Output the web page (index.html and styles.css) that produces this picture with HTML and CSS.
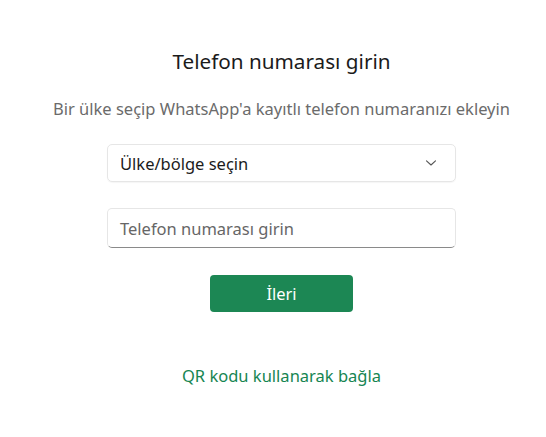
FILE: index.html
```html
<!DOCTYPE html>
<html lang="tr">
<head>
<meta charset="utf-8">
<link rel="stylesheet" href="styles.css">
</head>
<body>
<main class="page">
  <h1 class="title">Telefon numarası girin</h1>
  <p class="subtitle">Bir ülke seçip WhatsApp'a kayıtlı telefon numaranızı ekleyin</p>
  <div class="select">
    <span class="select-text">Ülke/bölge seçin</span>
    <svg class="chevron" width="12" height="8" viewBox="0 0 12 8"><path d="M1.5 1.8 L6 6 L10.5 1.8" fill="none" stroke="#555" stroke-width="1.1" stroke-linecap="round" stroke-linejoin="round"/></svg>
  </div>
  <div class="input"><span class="placeholder">Telefon numarası girin</span></div>
  <button class="next">İleri</button>
  <a class="qr-link">QR kodu kullanarak bağla</a>
</main>
</body>
</html>
```
FILE: styles.css
```css
* { box-sizing: border-box; }
html, body { margin: 0; padding: 0; background: #fff; }
body { font-family: "Noto Sans", "Open Sans", sans-serif; width: 546px; height: 437px; overflow: hidden; }
.page { display: flex; flex-direction: column; align-items: center; padding-top: 47px; padding-left: 17px; }
.title { margin: 0; font-size: 20.7px; font-weight: 400; color: #1b1b1b; line-height: 28px; }
.subtitle { margin: 23px 0 0; font-size: 16.5px; color: #6b6b6b; line-height: 22px; }
.select { margin-top: 24px; width: 349px; height: 38px; border: 1px solid #e6e6e6; border-radius: 5px; display: flex; align-items: center; justify-content: space-between; padding: 0 18px 0 12px; box-shadow: 0 1px 1px rgba(0,0,0,0.04); }
.select-text { font-size: 16.5px; color: #1b1b1b; }
.input { margin-top: 26px; width: 349px; height: 40px; border: 1px solid #e6e6e6; border-bottom: 1px solid #8a8a8a; border-radius: 5px; display: flex; align-items: center; padding: 0 12px; }
.placeholder { font-size: 16.5px; color: #666; }
.next { margin-top: 27px; width: 143px; height: 37px; border: none; border-radius: 4px; background: #1c8754; color: #fff; font-family: inherit; font-size: 16.5px; padding: 0; }
.qr-link { margin-top: 53px; font-size: 16.5px; color: #168552; line-height: 22px; }
```
